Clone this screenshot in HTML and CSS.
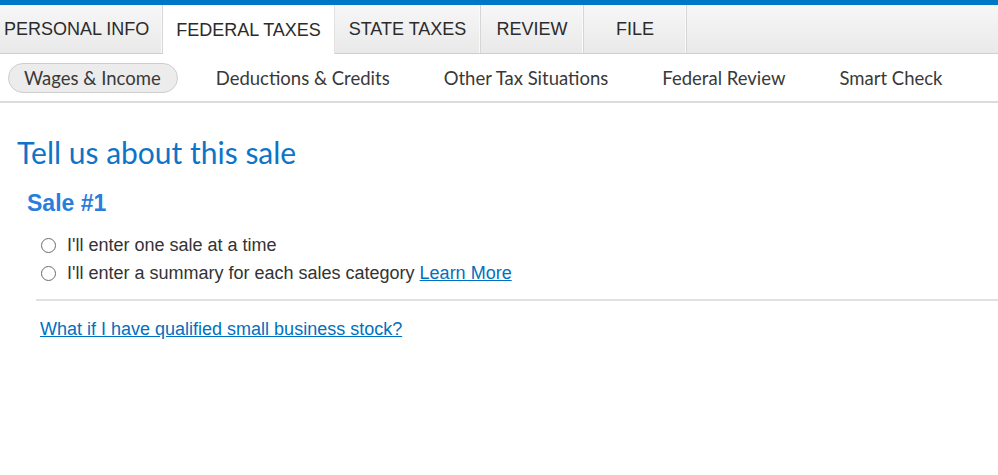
FILE: index.html
```html
<!DOCTYPE html>
<html lang="en">

<head>
    <meta charset="UTF-8">
    <meta name="viewport" content="width=device-width, initial-scale=1.0">
    <title>Tell us about this sale</title>
    <link rel="stylesheet" href="styles.css">
</head>

<body>
    <!-- top tabs -->
    <div class="tabs">
        <div class="tab tab-personal">PERSONAL INFO</div>
        <div class="tab tab-federal active">FEDERAL TAXES</div>
        <div class="tab tab-state">STATE TAXES</div>
        <div class="tab tab-review">REVIEW</div>
        <div class="tab tab-file">FILE</div>
        <div class="tab-rest"></div>
    </div>

    <!-- sub navigation -->
    <div class="subnav">
        <div class="subnav-item current">Wages &amp; Income</div>
        <div class="subnav-item">Deductions &amp; Credits</div>
        <div class="subnav-item">Other Tax Situations</div>
        <div class="subnav-item">Federal Review</div>
        <div class="subnav-item">Smart Check</div>
    </div>

    <div class="content">
        <h1 class="title">Tell us about this sale</h1>
        <h2 class="sale">Sale #1</h2>

        <div class="options">
            <label class="option">
                <span class="radio"></span>
                I'll enter one sale at a time
            </label>
            <label class="option">
                <span class="radio"></span>
                I'll enter a summary for each sales category <a href="#">Learn More</a>
            </label>
        </div>

        <div class="divider"></div>

        <a class="stock-link" href="#">What if I have qualified small business stock?</a>
    </div>
</body>

</html>
```

FILE: styles.css
```css
body {
    margin: 0;
    padding: 0;
    background: #fff;
    font-family: "Liberation Sans", Arial, sans-serif;
    color: #333;
}

/* top tabs */
.tabs {
    display: flex;
    height: 48px;
    border-top: 5px solid #0077c5;
    border-bottom: 1px solid #cfcfcf;
    background: linear-gradient(#f7f7f7, #e9e9e9);
}

.tab {
    display: flex;
    align-items: center;
    justify-content: center;
    font-size: 18px;
    color: #2b2b2b;
    border-right: 1px solid #d6d6d6;
    box-shadow: inset -1px 0 0 #fafafa;
    padding-top: 1px;
}

.tab-personal {
    width: 158px;
    justify-content: flex-start;
    padding-left: 4px;
}
.tab-federal { width: 171px; }
.tab-state { width: 145px; }
.tab-review { width: 102px; }
.tab-file { width: 102px; }

.tab.active {
    background: #fff;
    box-shadow: none;
    border-right-color: #e2e2e2;
    margin-bottom: -1px;
}

.tab-rest {
    flex: 1;
}

/* sub navigation */
.subnav {
    display: flex;
    align-items: center;
    height: 47px;
    padding-left: 8px;
    border-bottom: 2px solid #dcdcdc;
    font-family: Lato, "Open Sans", sans-serif;
    font-size: 18.5px;
    color: #393939;
}

.subnav-item {
    margin-right: 54px;
    line-height: 28px;
}

.subnav-item.current {
    padding: 0 16px 0 15px;
    background: #ececec;
    border: 1px solid #cdcdcd;
    border-radius: 15px;
    margin-right: 38px;
}

/* main content */
.content {
    padding: 0 0 0 17px;
}

.title {
    margin: 31px 0 0;
    font-family: Lato, "Open Sans", sans-serif;
    font-weight: normal;
    font-size: 30px;
    line-height: 36px;
    color: #0d74c7;
}

.sale {
    margin: 19px 0 0 10px;
    font-size: 23px;
    line-height: 28px;
    color: #2a7ddd;
}

.options {
    margin: 14px 0 0 24px;
}

.option {
    display: flex;
    align-items: center;
    font-size: 18px;
    line-height: 28px;
    color: #333;
}

.radio {
    width: 13px;
    height: 13px;
    border: 1px solid #6c6c6c;
    border-radius: 50%;
    margin-right: 11px;
    background: #fff;
}

.option a {
    color: #0070c0;
    margin-left: 5px;
}

.divider {
    margin: 12px 0 0 19px;
    border-top: 2px solid #e0e0e0;
}

.stock-link {
    display: inline-block;
    margin: 18px 0 0 23px;
    font-size: 18px;
    color: #0070c0;
}
```
